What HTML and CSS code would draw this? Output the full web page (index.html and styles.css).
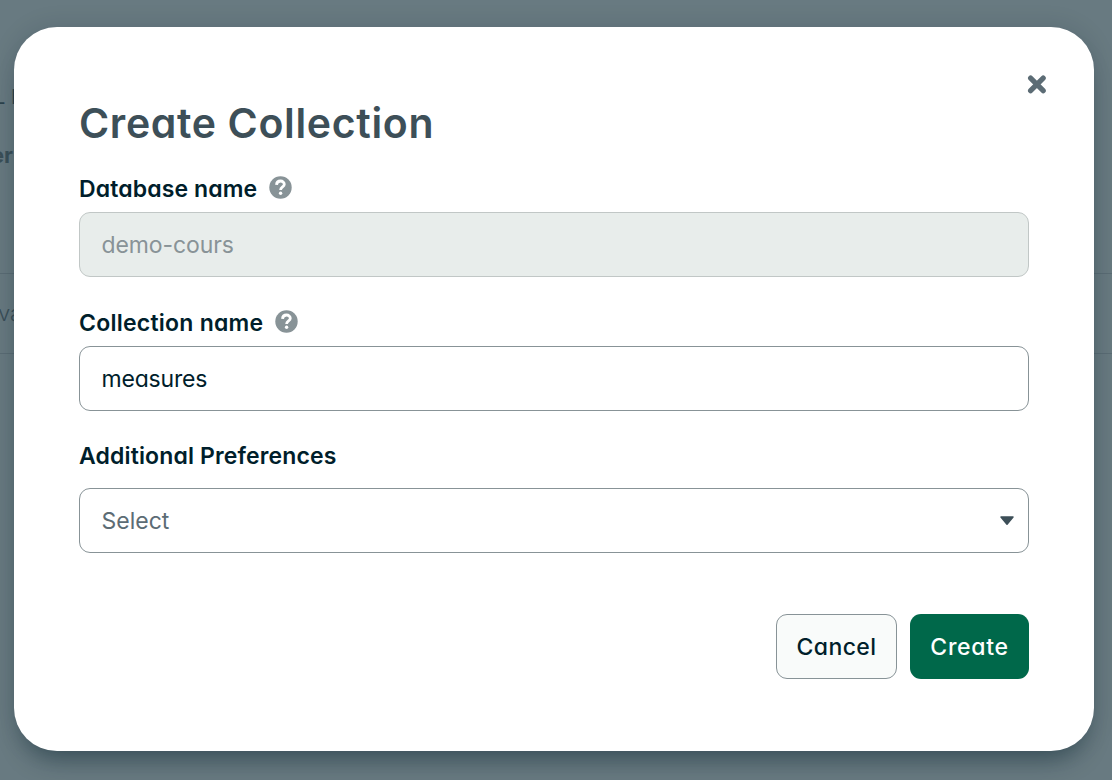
FILE: index.html
```html
<!DOCTYPE html>
<html lang="en">
<head>
<meta charset="utf-8">
<title>Create Collection</title>
<link rel="stylesheet" href="styles.css">
</head>
<body>
<div class="page" aria-hidden="true">
  <div class="page-tabs">L I</div>
  <div class="page-head">er</div>
  <div class="page-row">va</div>
</div>
<main class="modal" role="dialog" aria-labelledby="title">
  <button class="close" aria-label="Close">
    <svg width="20" height="20" viewBox="0 0 20 20"><path d="M3.6 4.1L16.2 16.7M16.2 4.1L3.6 16.7"/></svg>
  </button>
  <h1 class="title" id="title">Create Collection</h1>
  <div class="label label-db"><span class="t-db">Database name</span>
    <svg class="help" width="23" height="23" viewBox="0 0 23 23"><circle cx="11.5" cy="11.5" r="11.2"/><path d="M7.5 8.8C7.7 6.3 9.3 5 11.5 5C13.7 5 15.3 6.4 15.3 8.3C15.3 11 11.6 10.9 11.6 14"/><circle class="dot" cx="11.6" cy="17.3" r="1.7"/></svg>
  </div>
  <div class="field disabled"><span class="t-demo">demo-cours</span></div>
  <div class="label label-coll"><span class="t-coll">Collection name</span>
    <svg class="help" width="23" height="23" viewBox="0 0 23 23"><circle cx="11.5" cy="11.5" r="11.2"/><path d="M7.5 8.8C7.7 6.3 9.3 5 11.5 5C13.7 5 15.3 6.4 15.3 8.3C15.3 11 11.6 10.9 11.6 14"/><circle class="dot" cx="11.6" cy="17.3" r="1.7"/></svg>
  </div>
  <div class="field"><span class="t-meas">measures</span></div>
  <div class="label label-pref"><span class="t-pref">Additional Preferences</span></div>
  <div class="field select"><span class="t-select">Select</span>
    <svg class="caret" width="16" height="10" viewBox="0 0 16 10"><path d="M2 1H14L8 8.2Z"/></svg>
  </div>
  <div class="actions">
    <button class="btn cancel">Cancel</button>
    <button class="btn create">Create</button>
  </div>
</main>
</body>
</html>
```
FILE: styles.css
```css
* { box-sizing: border-box; }
body {
  margin: 0;
  width: 1112px;
  height: 780px;
  overflow: hidden;
  padding: 27px 18px 29px 14px;
  background: #687a81;
  font-family: Inter, "Open Sans", sans-serif;
  font-feature-settings: "cv11";
  color: #001e2b;
}
.page {
  position: absolute;
  inset: 0;
  overflow: hidden;
  color: #3b5059;
  white-space: nowrap;
  font-feature-settings: normal;
}
.page-tabs { height: 118px; padding-top: 84px; margin-left: -6px; font-size: 20px; line-height: 27px; color: #2c434d; }
.page-head { height: 61px; padding-top: 24px; margin-left: -9px; font-size: 22px; font-weight: 700; line-height: 27px; }
.page-row {
  margin-top: 94px;
  height: 81px;
  padding-top: 25px;
  border-top: 1px solid #5b6d75;
  border-bottom: 1px solid #5b6d75;
  font-size: 22px;
  font-weight: 300;
  line-height: 28px;
  text-indent: -2px;
}
.modal {
  position: relative;
  width: 1080px;
  height: 724px;
  padding: 72px 65px;
  border-radius: 43px;
  background: #fff;
  box-shadow: 0 18px 27px -11px rgba(0, 30, 43, .45), 0 0 24px rgba(0, 30, 43, .14);
}
.close {
  position: absolute;
  top: 47px;
  right: 47px;
  width: 20px;
  height: 20px;
  padding: 0;
  border: 0;
  background: none;
}
.close svg { display: block; fill: none; stroke: #5c6c75; stroke-width: 5.2; stroke-linecap: round; }
.title {
  margin: 0;
  height: 76px;
  font-size: 41px;
  line-height: 48px;
  font-weight: 600;
  letter-spacing: .65px;
  color: #3d4f58;
}
.label {
  display: flex;
  align-items: center;
  gap: 12px;
  height: 26px;
  font-size: 23px;
  line-height: 26px;
  font-weight: 600;
  white-space: nowrap;
}
.label-db { margin-bottom: 11px; }
.label-coll { margin: 32px 0 11px; }
.label-pref { margin: 32px 0 19px; }
.t-db, .t-coll { padding-top: 2px; }
.t-db { letter-spacing: .12px; }
.t-coll { letter-spacing: .24px; }
.t-pref { letter-spacing: .14px; }
.t-demo { letter-spacing: -.1px; }
.t-meas { letter-spacing: -.2px; }
.help { fill: #889397; margin-bottom: 1px; }
.help path { fill: none; stroke: #fff; stroke-width: 2.8; }
.help .dot { fill: #fff; }
.field {
  display: flex;
  align-items: center;
  height: 65px;
  padding: 0 13px 0 21.5px;
  border: 1px solid #889397;
  border-radius: 11px;
  background: #fff;
  font-size: 23px;
}
.disabled { background: #e8edeb; border-color: #c1c7c6; color: #889397; }
.select { justify-content: space-between; color: #5c6c75; }
.caret { fill: #3d4f58; stroke: #3d4f58; stroke-width: 1.5; stroke-linejoin: round; }
.actions { display: flex; justify-content: flex-end; gap: 13px; margin-top: 61px; }
.btn {
  height: 65px;
  padding: 0;
  border-radius: 11px;
  font: inherit;
  font-feature-settings: inherit;
  font-size: 23px;
  font-weight: 500;
}
.cancel { width: 121px; border: 1px solid #889397; background: #f9fbfa; color: #001e2b; letter-spacing: .4px; }
.create { width: 119px; border: 0; background: #00684a; color: #fff; letter-spacing: .7px; }
```
